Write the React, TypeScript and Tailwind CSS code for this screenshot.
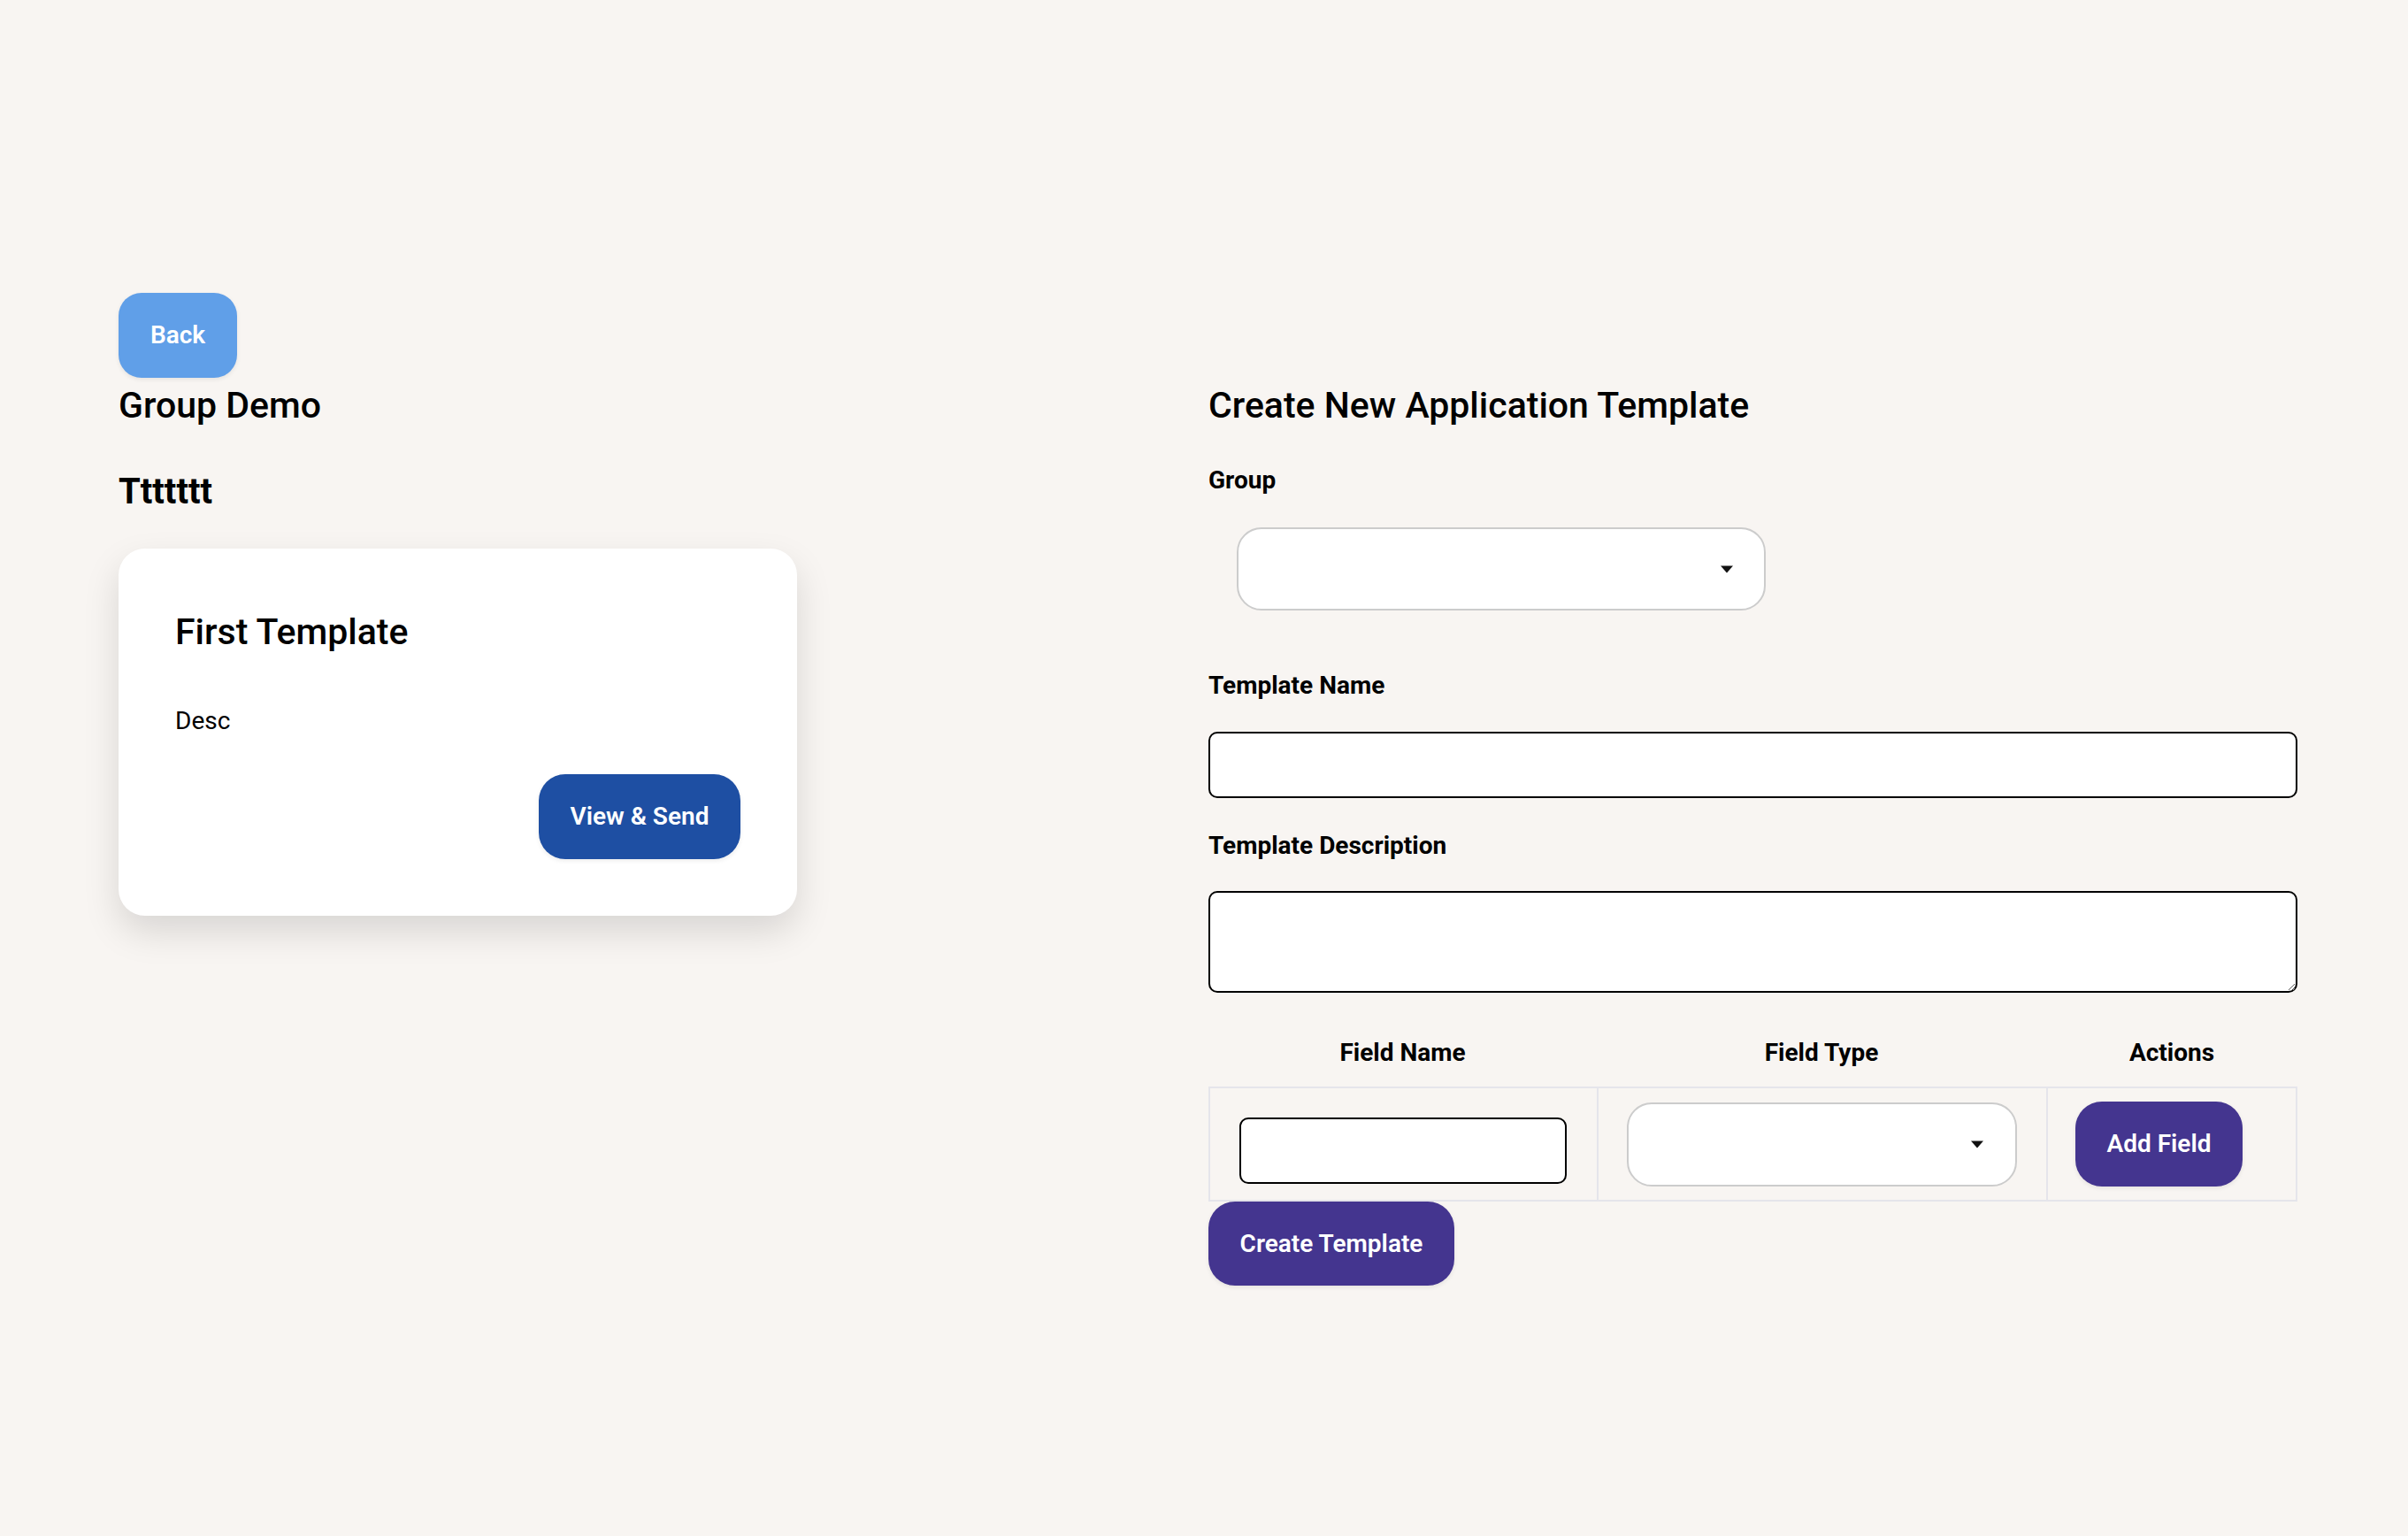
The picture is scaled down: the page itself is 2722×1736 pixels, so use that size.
import React from "react";

function Caret() {
  return (
    <svg width="16" height="9" viewBox="0 0 16 9" className="block">
      <path d="M1 0.5 L15 0.5 L8 8.5 Z" fill="#111" />
    </svg>
  );
}

export default function App() {
  return (
    <div
      className="min-h-[1736px] w-full bg-[#f8f5f2] text-black"
      style={{ fontFamily: "Roboto, 'Noto Sans', Arial, sans-serif" }}
    >
      <div className="flex pl-[134px] pt-[331px]">
        {/* Left column */}
        <div className="flex w-[1232px] flex-col">
          <button className="flex h-[96px] w-[134px] items-center justify-center rounded-[26px] bg-[#609fe8] text-[28px] font-semibold text-white shadow-[0_2px_5px_rgba(0,0,0,0.08)]">
            Back
          </button>
          <h2 className="mt-[7px] text-[41px] font-medium leading-[48px]">Group Demo</h2>
          <h3 className="mt-[50px] text-[40px] font-bold leading-[48px]">Ttttttt</h3>
          <div className="mt-[40px] flex w-[767px] flex-col rounded-[30px] bg-white px-[64px] pb-[64px] pt-[70px] shadow-[0_18px_40px_rgba(0,0,0,0.13)]">
            <h4 className="text-[41px] font-medium leading-[48px]">First Template</h4>
            <p className="mt-[61px] text-[28px] leading-[32px]">Desc</p>
            <div className="mt-[44px] flex justify-end">
              <button className="flex h-[96px] w-[228px] items-center justify-center rounded-[30px] bg-[#1e4fa3] text-[28px] font-semibold text-white shadow-[0_2px_5px_rgba(0,0,0,0.08)]">
                View &amp; Send
              </button>
            </div>
          </div>
        </div>

        {/* Right column */}
        <div className="flex w-[1231px] flex-col pt-[103px]">
          <h2 className="text-[41px] font-medium leading-[48px]">Create New Application Template</h2>
          <label className="mt-[45px] text-[28px] font-bold leading-[32px]">Group</label>
          <div className="ml-[32px] mt-[37px] flex h-[94px] w-[598px] items-center justify-end rounded-[28px] border-2 border-[#cccccc] bg-white pr-[34px]">
            <Caret />
          </div>
          <label className="mt-[69px] text-[28px] font-bold leading-[32px]">Template Name</label>
          <input
            className="mt-[36px] h-[75px] w-full rounded-[10px] border-2 border-black bg-white px-4 text-[26px] outline-none"
            type="text"
          />
          <label className="mt-[38px] text-[28px] font-bold leading-[32px]">Template Description</label>
          <textarea className="mt-[35px] block h-[115px] w-full rounded-[10px] border-2 border-black bg-white px-4 text-[26px] outline-none" />

          {/* Table */}
          <div className="mt-[30px] w-[1231px]">
            <div className="grid h-[76px] grid-cols-[439px_508px_284px] items-center text-[28px] font-bold leading-[34px]">
              <div className="text-center">Field Name</div>
              <div className="text-center">Field Type</div>
              <div className="text-center">Actions</div>
            </div>
            <div className="grid h-[130px] grid-cols-[439px_508px_284px] border-2 border-[#e5e5eb]">
              <div className="border-r-2 border-[#e5e5eb] pl-[33px] pt-[33px]">
                <input
                  className="h-[75px] w-[370px] rounded-[10px] border-2 border-black bg-white px-3 text-[26px] outline-none"
                  type="text"
                />
              </div>
              <div className="border-r-2 border-[#e5e5eb] pl-[32px] pt-[16px]">
                <div className="flex h-[95px] w-[441px] items-center justify-end rounded-[28px] border-2 border-[#cccccc] bg-white pr-[35px]">
                  <Caret />
                </div>
              </div>
              <div className="pl-[31px] pt-[15px]">
                <button className="flex h-[96px] w-[189px] items-center justify-center rounded-[30px] bg-[#44358f] text-[28px] font-semibold text-white shadow-[0_2px_5px_rgba(0,0,0,0.08)]">
                  Add Field
                </button>
              </div>
            </div>
          </div>
          <div className="flex">
            <button className="flex h-[95px] w-[278px] items-center justify-center rounded-[30px] bg-[#44358f] text-[28px] font-semibold text-white shadow-[0_2px_5px_rgba(0,0,0,0.08)]">
              Create Template
            </button>
          </div>
        </div>
      </div>
    </div>
  );
}
